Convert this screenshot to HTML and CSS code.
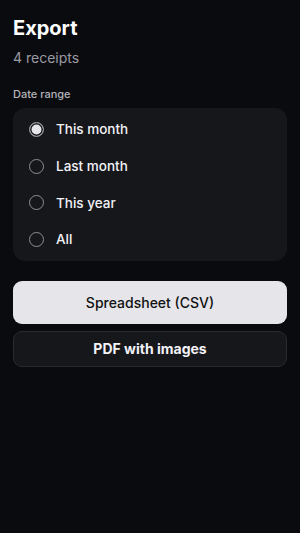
FILE: index.html
```html
<!DOCTYPE html>
<html lang="en">
<head>
    <meta charset="UTF-8">
    <meta name="viewport" content="width=device-width, initial-scale=1.0">
    <title>Export</title>
    <link rel="stylesheet" href="styles.css">
</head>
<body>
    <div class="page">
        <h1 class="title">Export</h1>
        <p class="count">4 receipts</p>

        <div class="section-label">Date range</div>
        <div class="range-card">
            <label class="option"><span class="radio checked"></span>This month</label>
            <label class="option"><span class="radio"></span>Last month</label>
            <label class="option"><span class="radio"></span>This year</label>
            <label class="option"><span class="radio"></span>All</label>
        </div>

        <div class="actions">
            <button class="btn btn-primary">Spreadsheet (CSV)</button>
            <button class="btn btn-secondary">PDF with images</button>
        </div>
    </div>
</body>
</html>
```

FILE: styles.css
```css
* { box-sizing: border-box; }

body {
    margin: 0;
    background: #0a0b0f;
    color: #f2f2f7;
    font-family: Inter, "Noto Sans", sans-serif;
    min-height: 100vh;
}

.page {
    padding: 16px 13px;
}

.title {
    margin: 0;
    font-size: 20px;
    font-weight: 700;
    line-height: 24px;
    color: #fff;
}

.count {
    margin: 9px 0 0 0;
    font-size: 14px;
    line-height: 18px;
    color: #9a9aa2;
}

.section-label {
    margin-top: 20px;
    font-size: 11px;
    line-height: 14px;
    font-weight: 500;
    color: #b4b4bb;
}

.range-card {
    margin-top: 7px;
    background: #16171b;
    border-radius: 12px;
    padding: 3px 0;
    display: flex;
    flex-direction: column;
}

.option {
    display: flex;
    align-items: center;
    gap: 12px;
    height: 36.7px;
    padding-left: 16px;
    font-size: 13.5px;
    font-weight: 500;
    color: #f2f2f7;
}

.radio {
    width: 15px;
    height: 15px;
    border-radius: 50%;
    border: 1.5px solid #8e8e93;
    flex-shrink: 0;
}

.radio.checked {
    background: #e5e5ea;
    box-shadow: inset 0 0 0 1.5px #16171b;
}

.actions {
    margin-top: 20px;
    display: flex;
    flex-direction: column;
    gap: 7px;
}

.btn {
    font-family: inherit;
    font-size: 14px;
    border-radius: 9px;
    width: 100%;
    cursor: pointer;
}

.btn-primary {
    height: 43px;
    background: #e5e5ea;
    color: #111;
    border: none;
    font-weight: 500;
}

.btn-secondary {
    height: 36px;
    background: #16171b;
    color: #f2f2f7;
    border: 1px solid #2a2b30;
    font-weight: 700;
}
```
